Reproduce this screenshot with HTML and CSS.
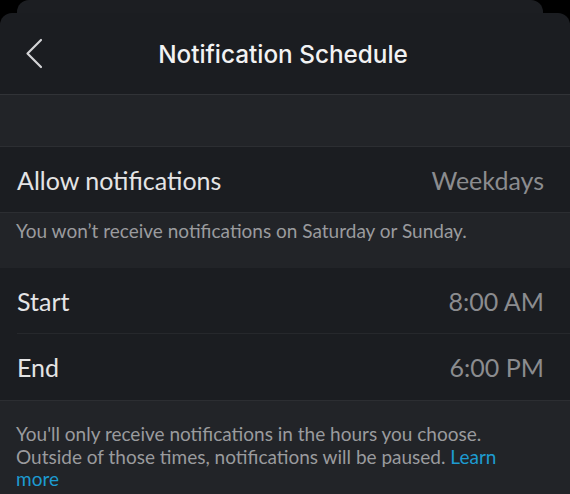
FILE: index.html
```html
<!DOCTYPE html>
<html>
<head>
  <title>Notification Schedule</title>
  <link rel="stylesheet" href="styles.css">
</head>
<body>
  <div class="sheet-back"></div>

  <div class="sheet">
    <div class="header">
      <button class="back" aria-label="Back">
        <svg width="20" height="32" viewBox="0 0 20 32">
          <path d="M16 2 L2.5 15.5 L16 29" fill="none" stroke="#d4d4d6" stroke-width="2.2" stroke-linecap="round" stroke-linejoin="round"/>
        </svg>
      </button>
      <h1>Notification Schedule</h1>
    </div>

    <div class="band"></div>

    <div class="row row-single">
      <span class="label">Allow notifications</span>
      <span class="value">Weekdays</span>
    </div>
    <div class="note note-short">You won’t receive notifications on Saturday or Sunday.</div>

    <div class="group">
      <div class="row row-start">
        <span class="label">Start</span>
        <span class="value">8:00 AM</span>
      </div>
      <div class="row">
        <span class="label">End</span>
        <span class="value">6:00 PM</span>
      </div>
    </div>
    <div class="note note-long">
      You'll only receive notifications in the hours you choose.
      Outside of those times, notifications will be paused. <a href="#">Learn more</a>
    </div>
  </div>
</body>
</html>
```

FILE: styles.css
```css
html, body {
  margin: 0;
  height: 100%;
  background-color: #000;
  overflow: hidden;
}

body {
  font-family: Lato, "Noto Sans", sans-serif;
}

.sheet-back {
  height: 13px;
  margin: 0 27px 0 17px;
  background-color: #1c1e22;
  border-radius: 12px 12px 0 0;
}

.sheet {
  background-color: #1b1d21;
  border-radius: 12px 12px 0 0;
  height: 481px;
  overflow: hidden;
}

.header {
  height: 81px;
  display: flex;
  align-items: center;
  justify-content: center;
  position: relative;
  border-bottom: 1px solid #313337;
}

.back {
  position: absolute;
  left: 25px;
  top: 25px;
  background: none;
  border: none;
  padding: 0;
  cursor: pointer;
}

.header h1 {
  margin: 0 4px 0 0;
  font-family: Inter, Roboto, sans-serif;
  font-weight: 500;
  font-size: 24.3px;
  color: #f2f2f3;
}

.band {
  height: 51px;
  background-color: #222428;
  border-bottom: 1px solid #2c2e32;
}

.row {
  display: flex;
  justify-content: space-between;
  align-items: center;
  padding: 0 26px 0 17px;
  height: 66px;
  font-size: 25px;
}

.row-single {
  height: 65px;
  border-bottom: 1px solid #2c2e32;
}

.label {
  color: #e4e4e5;
}

.value {
  color: #8b8c8f;
}

.group {
  background-color: #1b1d21;
  border-bottom: 1px solid #2c2e32;
}

.row-start {
  height: 66px;
  box-shadow: inset 0 -1px 0 #26282c;
  margin-left: 17px;
  padding-left: 0;
}

.note {
  background-color: #222428;
  color: #9a9b9e;
  font-size: 19px;
  line-height: 22.5px;
  padding: 7px 50px 0 16px;
}

.note-short {
  height: 48px;
}

.note-long {
  padding-top: 22px;
  height: 100%;
}

.note a {
  color: #1d9bd1;
  text-decoration: none;
}
```
